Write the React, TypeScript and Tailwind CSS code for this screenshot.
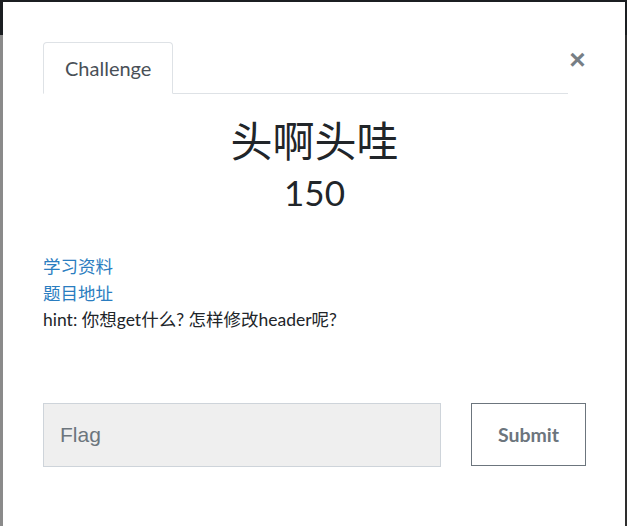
import React from "react";

export default function App() {
  return (
    <div
      className="flex w-[627px] h-[526px] bg-[#1b1e21] overflow-hidden"
      style={{ fontFamily: 'Lato, "Noto Sans CJK SC", sans-serif' }}
    >
      <div className="flex flex-col w-[3px] shrink-0">
        <div className="h-[35px] bg-[#1b1e21]" />
        <div className="flex-1 bg-[#8a8a8a]" />
      </div>
      <div className="mt-[2px] w-[622px] shrink-0 bg-white pl-[40px] pr-[39px] pt-[40px]">
        <div className="flex items-start">
          <div className="flex-1 flex border-b border-[#dee2e6]">
            <div className="h-[52px] -mb-px px-[21px] flex items-center border border-[#dee2e6] border-b-white rounded-t-[4px] text-[20px] text-[#495057]">
              Challenge
            </div>
          </div>
          <button className="w-[17px] ml-[1px] mt-[4px] text-[28px] leading-[28px] font-bold text-[#777e85]" style={{ fontFamily: '"Liberation Sans", sans-serif' }}>
            ×
          </button>
        </div>
        <div className="text-center text-[#212529]">
          <div className="mt-[17px] text-[42px] leading-[60px]">头啊头哇</div>
          <div className="text-[35px] leading-[42px]">150</div>
        </div>
        <div className="mt-[40px] text-[17.5px] leading-[27px]">
          <div className="text-[#2a7dc0]">学习资料</div>
          <div className="text-[#2a7dc0]">题目地址</div>
          <div className="text-[#212529] leading-[26px]">hint: 你想get什么? 怎样修改header呢?</div>
        </div>
        <div className="mt-[70px] flex items-start">
          <div
            className="w-[398px] h-[64px] bg-[#efefef] border border-[#ced4da] flex items-center pl-[16px] text-[21px] text-[#6c757d]"
            style={{ fontFamily: '"Liberation Sans", sans-serif' }}
          >
            Flag
          </div>
          <button className="ml-[30px] w-[115px] h-[63px] border border-[#6c757d] bg-white text-[19.5px] font-bold text-[#6c757d]">
            Submit
          </button>
        </div>
      </div>
      <div className="flex flex-col w-[3px] shrink-0">
        <div className="h-[35px] bg-[#1b1e21]" />
        <div className="flex-1 bg-[#2e2e2e]" />
      </div>
    </div>
  );
}
